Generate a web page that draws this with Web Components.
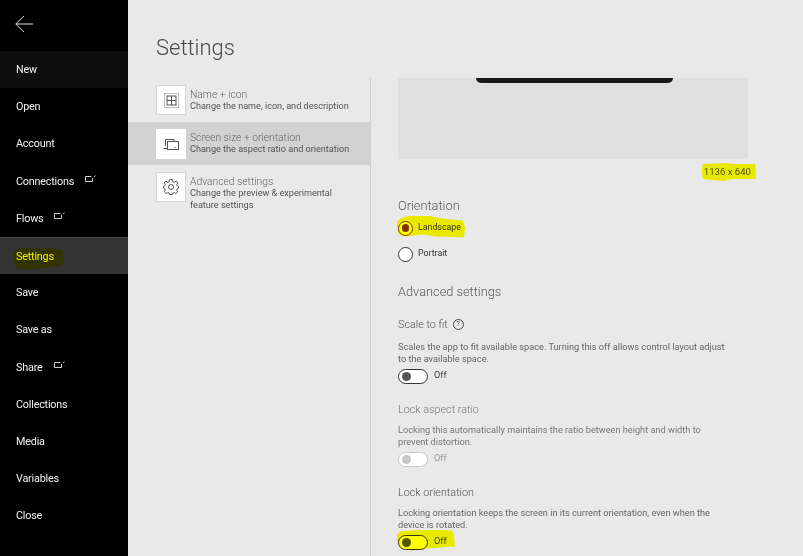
<!DOCTYPE html>
<html>
<head>
<meta charset="utf-8">
<title>Settings</title>
<style>
  html, body { margin: 0; padding: 0; height: 100%; }
  body { font-family: Roboto, "Open Sans", "Liberation Sans", sans-serif; background: #e9e9e9; overflow: hidden; }
</style>
</head>
<body>
<app-shell>
  <side-nav slot="nav">
    <nav-item variant="hover" style="margin-top:51px">New</nav-item>
    <nav-item>Open</nav-item>
    <nav-item>Account</nav-item>
    <nav-item external>Connections</nav-item>
    <nav-item external>Flows</nav-item>
    <nav-item variant="active" marked>Settings</nav-item>
    <nav-item>Save</nav-item>
    <nav-item>Save as</nav-item>
    <nav-item external>Share</nav-item>
    <nav-item>Collections</nav-item>
    <nav-item>Media</nav-item>
    <nav-item>Variables</nav-item>
    <nav-item>Close</nav-item>
  </side-nav>

  <section-item slot="list" icon="name" title-text="Name + icon" style="height:44px">Change the name, icon, and description</section-item>
  <section-item slot="list" icon="screen" title-text="Screen size + orientation" active style="height:43px">Change the aspect ratio and orientation</section-item>
  <section-item slot="list" icon="gear" title-text="Advanced settings">Change the preview &amp; experimental feature settings</section-item>

  <screen-preview slot="detail"></screen-preview>

  <group-heading slot="detail" style="margin-top:19px">Orientation</group-heading>
  <radio-option slot="detail" checked marked style="margin-top:6px">Landscape</radio-option>
  <radio-option slot="detail" style="margin-top:10px">Portrait</radio-option>

  <group-heading slot="detail" style="margin-top:21px">Advanced settings</group-heading>

  <toggle-setting slot="detail" help heading="Scale to fit" style="margin-top:18px">Scales the app to fit available space. Turning this off allows control layout adjust to the available space.</toggle-setting>
  <toggle-setting slot="detail" disabled heading="Lock aspect ratio" style="margin-top:19px">Locking this automatically maintains the ratio between height and width to prevent distortion.</toggle-setting>
  <toggle-setting slot="detail" marked heading="Lock orientation" style="margin-top:19px">Locking orientation keeps the screen in its current orientation, even when the device is rotated.</toggle-setting>
</app-shell>

<script>
const define = (name, css, html) => {
  customElements.define(name, class extends HTMLElement {
    constructor() {
      super();
      this.attachShadow({ mode: 'open' });
    }
    connectedCallback() {
      const attrs = (key) => this.getAttribute(key);
      const has = (key) => this.hasAttribute(key);
      this.shadowRoot.innerHTML = `<style>${css}</style>${typeof html === 'function' ? html(attrs, has) : html}`;
    }
  });
};

// the yellow marker scribbles, multiplied over whatever they cover
const markCss = `
  .mark { position: absolute; background: #ffff00; mix-blend-mode: multiply; pointer-events: none; }
`;
const blob = (points) => `clip-path: polygon(${points.map(([x, y]) => `${x}px ${y}px`).join(',')});`;

define('app-shell', `
  :host { display: flex; width: 803px; height: 556px; overflow: hidden; }
  .nav { flex: 0 0 128px; }
  main { flex: 1; min-width: 0; display: flex; flex-direction: column; }
  h1 { margin: 0; padding: 33px 0 0 28px; height: 45px; font-size: 22px; line-height: 30px; font-weight: 300; color: #4a4a4a; }
  .cols { display: flex; flex: 1; min-height: 0; }
  .list { flex: 0 0 243px; display: flex; flex-direction: column; height: 100%; box-sizing: border-box; border-right: 1px solid #d0d0d0; }
  .detail { flex: 1; padding-left: 27px; padding-right: 55px; min-width: 0; }
`, `
  <div class="nav"><slot name="nav"></slot></div>
  <main>
    <h1>Settings</h1>
    <div class="cols">
      <div class="list"><slot name="list"></slot></div>
      <div class="detail"><slot name="detail"></slot></div>
    </div>
  </main>
`);

define('side-nav', `
  :host { display: block; height: 556px; background: #000; position: relative; overflow: hidden; }
  svg { position: absolute; left: 15px; top: 15px; }
`, `
  <svg width="19" height="18" viewBox="0 0 19 18" fill="none" stroke="#e4e4e4" stroke-width="1">
    <path d="M0.8 9H18M9 1L0.8 9L9 17"/>
  </svg>
  <slot></slot>
`);

define('nav-item', `
  :host { display: flex; align-items: center; height: 37.2px; padding-left: 16px; font-size: 10.8px; letter-spacing: -0.2px; color: #f0f0f0; position: relative; box-sizing: border-box; }
  :host([variant="hover"]) { background: #0e0e0e; }
  :host([variant="active"]) { background: #333; border-top: 1px solid #4a4a4a; }
  svg { margin-left: 11px; margin-top: -5px; }
  ${markCss}
  .mark { left: 12px; top: 10px; width: 52px; height: 22px; ${blob([[2,2],[8,0],[40,0],[50,2],[52,8],[51,17],[44,19],[30,20],[14,22],[4,20],[1,12]])} }
`, (a, has) => `
  <slot></slot>
  ${has('external') ? `<svg width="11" height="8" viewBox="0 0 11 8" fill="none" stroke="#cfcfcf" stroke-width="1"><path d="M6.5 1.5H0.5V6.5H7.5V3"/><path d="M9 2L10.5 0.5"/></svg>` : ''}
  ${has('marked') ? '<span class="mark"></span>' : ''}
`);

const icons = {
  name: `<svg width="15" height="15" viewBox="0 0 15 15" fill="none" stroke="#555"><rect x="0.5" y="0.5" width="14" height="14" stroke-dasharray="1 1" stroke="#777"/><rect x="3" y="3" width="9" height="9"/><path d="M7.5 3V12M3 7.5H12"/></svg>`,
  screen: `<svg width="16" height="12" viewBox="0 0 16 12" fill="none" stroke="#555"><path d="M2.5 8V1.5H11V3.5"/><rect x="4.5" y="3.5" width="11" height="8"/><path d="M0.5 10.5H4.5M11.5 9.5H12.5"/></svg>`,
  gear: `<svg width="16" height="16" viewBox="0 0 16 16" fill="none" stroke="#555"><circle cx="8" cy="8" r="2.5"/><path d="M6.6 0.6H9.4L9.8 2.7L11.3 3.3L13.1 2.1L15 4.1L13.7 5.8L14.3 7L15.5 7.4V9.3L14.2 9.9L13.7 11L14.8 12.8L12.9 14.6L11.2 13.5L9.9 14L9.4 15.5H6.6L6.2 14L4.9 13.5L3.1 14.6L1.2 12.8L2.3 11L1.8 9.9L0.5 9.3V7.4L1.8 7L2.3 5.8L1 4.1L2.9 2.1L4.7 3.3L6.2 2.7Z"/></svg>`
};

define('section-item', `
  :host { display: flex; gap: 4px; padding: 7px 16px 0 28px; box-sizing: border-box; }
  :host([active]) { background: #d2d2d2; }
  .tile { flex: 0 0 30px; height: 30px; box-sizing: border-box; background: #fff; border: 1px solid #d4d4d4; display: flex; align-items: center; justify-content: center; }
  :host([active]) .tile { border-color: #fff; }
  .text { margin-top: 4px; }
  :host([active]) .text { margin-top: 3px; }
  .title { font-size: 10.3px; line-height: 12px; font-weight: 300; color: #666; }
  .desc { font-size: 9.1px; line-height: 11.5px; color: #555; }
`, (a) => `
  <div class="tile">${icons[a('icon')]}</div>
  <div class="text">
    <div class="title">${a('title-text')}</div>
    <div class="desc"><slot></slot></div>
  </div>
`);

define('screen-preview', `
  :host { display: block; width: 350px; position: relative; }
  .box { height: 81px; background: #e0e0e0; display: flex; justify-content: center; }
  .device { width: 197px; height: 5px; background: #1a1a1a; border-radius: 0 0 5px 5px; margin-left: 3px; }
  .size { display: block; width: max-content; margin: 5.5px -3px 0 auto; font-size: 9.6px; line-height: 13px; color: #555; position: relative; }
  ${markCss}
  .mark { left: -2px; top: -1.5px; width: 54px; height: 18px; ${blob([[1,1],[25,0],[32,1],[53,1],[54,5],[54,16],[30,16],[22,18],[1,16],[0,8]])} }
`, `
  <div class="box"><div class="device"></div></div>
  <div class="size">1136 x 640<span class="mark"></span></div>
`);

define('group-heading', `
  :host { display: block; font-size: 12.8px; line-height: 17px; font-weight: 300; color: #5a5a5a; }
`, `<slot></slot>`);

define('radio-option', `
  :host { display: flex; gap: 5px; position: relative; height: 16px; }
  .dot { flex: 0 0 15px; height: 15px; margin-top: 1px; box-sizing: border-box; border-radius: 50%; background: #fff; border: 1px solid #333; display: flex; align-items: center; justify-content: center; }
  :host([checked]) .dot { border-color: #7d3a00; }
  .dot i { width: 7.5px; height: 7.5px; border-radius: 50%; background: #7d3300; }
  .label { font-size: 8.8px; line-height: 11px; color: #333; margin-top: 2px; }
  ${markCss}
  .mark { left: -1px; top: -4px; width: 68px; height: 22px; ${blob([[0,6],[5,2],[14,0],[30,0],[45,3],[66,5],[68,12],[67,22],[40,21],[25,19],[8,21],[2,19],[0,12]])} }
`, (a, has) => `
  <div class="dot">${has('checked') ? '<i></i>' : ''}</div>
  <div class="label"><slot></slot></div>
  ${has('marked') ? '<span class="mark"></span>' : ''}
`);

define('toggle-setting', `
  :host { display: block; position: relative; }
  .head { display: flex; align-items: center; gap: 5px; height: 14px; font-size: 10.8px; line-height: 14px; font-weight: 300; color: #555; }
  :host([disabled]) .head { color: #777; }
  .help { width: 9px; height: 9px; border: 1px solid #444; border-radius: 50%; font-size: 7px; line-height: 9px; text-align: center; color: #444; font-weight: 400; }
  .desc { font-size: 9.2px; line-height: 12px; color: #666; margin-top: 7px; width: 330px; }
  :host([help]) .desc { margin-top: 9px; }
  :host([disabled]) .desc { color: #777; }
  .row { display: flex; align-items: center; gap: 6px; margin-top: 4px; position: relative; height: 15px; }
  .track { width: 28px; height: 13px; border: 1px solid #333; border-radius: 8px; background: #fff; display: flex; align-items: center; }
  .knob { width: 9px; height: 9px; border-radius: 50%; background: #555; margin-left: 3px; }
  :host([disabled]) .track { border-color: #c8c8c8; }
  :host([disabled]) .knob { background: #c8c8c8; }
  .off { font-size: 9.2px; color: #444; margin-top: -4px; }
  :host([disabled]) .off { color: #999; }
  ${markCss}
  .mark { left: -1px; top: -5px; width: 58px; height: 21px; ${blob([[3,2],[25,0],[55,1],[57,6],[58,17],[30,19],[15,21],[4,19],[0,12],[0,5]])} }
`, (a, has) => `
  <div class="head">${a('heading')}${has('help') ? '<span class="help">?</span>' : ''}</div>
  <div class="desc"><slot></slot></div>
  <div class="row">
    <div class="track"><div class="knob"></div></div>
    <div class="off">Off</div>
    ${has('marked') ? '<span class="mark"></span>' : ''}
  </div>
`);
</script>
</body>
</html>
